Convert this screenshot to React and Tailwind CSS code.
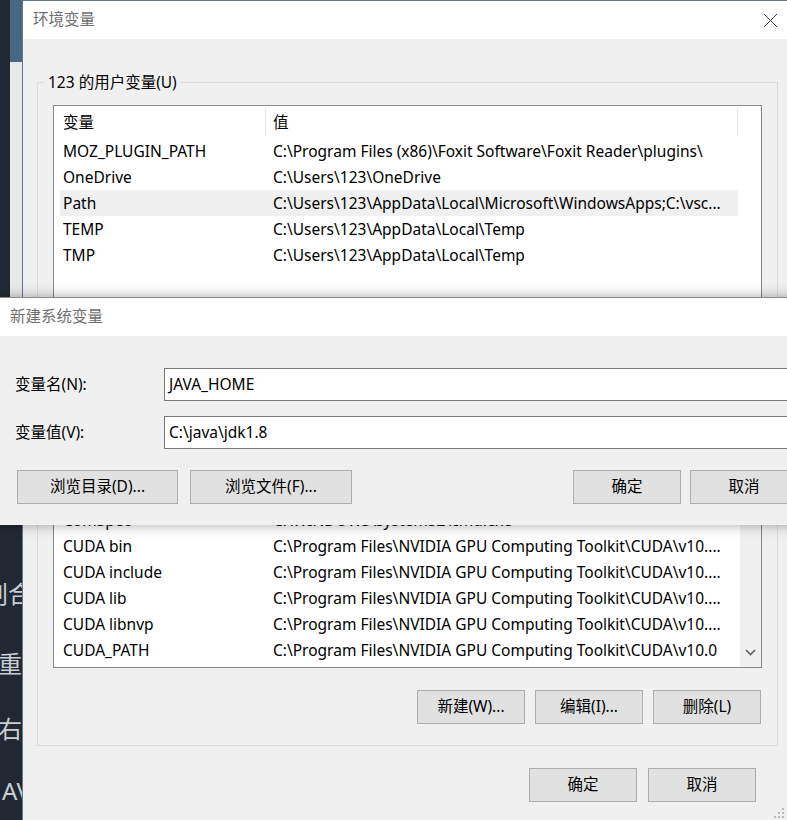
import React from "react";

const userVars = [
  ["MOZ_PLUGIN_PATH", "C:\\Program Files (x86)\\Foxit Software\\Foxit Reader\\plugins\\"],
  ["OneDrive", "C:\\Users\\123\\OneDrive"],
  ["Path", "C:\\Users\\123\\AppData\\Local\\Microsoft\\WindowsApps;C:\\vsc..."],
  ["TEMP", "C:\\Users\\123\\AppData\\Local\\Temp"],
  ["TMP", "C:\\Users\\123\\AppData\\Local\\Temp"],
];

const cuda = "C:\\Program Files\\NVIDIA GPU Computing Toolkit\\CUDA\\v10....";

const sysVars = [
  ["ChocolateyInstall", "C:\\ProgramData\\chocolatey"],
  ["CLASSPATH", ".;%JAVA_HOME%\\lib;%JAVA_HOME%\\lib\\tools.jar"],
  ["ComSpec", "C:\\WINDOWS\\system32\\cmd.exe"],
  ["CUDA bin", cuda],
  ["CUDA include", cuda],
  ["CUDA lib", cuda],
  ["CUDA libnvp", cuda],
  ["CUDA_PATH", "C:\\Program Files\\NVIDIA GPU Computing Toolkit\\CUDA\\v10.0"],
];

function Btn({ children, className = "" }) {
  return (
    <div
      className={`h-[34px] flex items-center justify-center bg-[#e1e1e1] border border-[#adadad] text-[15.5px] text-black whitespace-nowrap shrink-0 ${className}`}
    >
      {children}
    </div>
  );
}

function ListHeader() {
  return (
    <div className="flex h-[32px] shrink-0">
      <div className="w-[212px] pl-[9px] pt-[2px] flex items-center border-r border-[#e5e5e5] my-[2px]">变量</div>
      <div className="w-[472px] pl-[7px] pt-[2px] flex items-center border-r border-[#e5e5e5] my-[2px]">值</div>
    </div>
  );
}

function Row({ name, value, selected }) {
  return (
    <div
      className={`flex items-center h-[26px] pt-[2px] ml-[6px] w-[678px] shrink-0 ${selected ? "bg-[#f0f0f0]" : ""}`}
    >
      <div className="w-[213px] pl-[3px] whitespace-nowrap">{name}</div>
      <div className="flex-1 whitespace-nowrap overflow-hidden">{value}</div>
    </div>
  );
}

function GroupBox({ label, children, className = "" }) {
  return (
    <fieldset className={`border border-[#dcdcdc] ${className}`}>
      <legend className="ml-[6px] px-[4px] leading-[20px] text-[15.5px]">{label}</legend>
      {children}
    </fieldset>
  );
}

function LeftStrip() {
  return (
    <div className="w-[22px] h-[820px] shrink-0 flex bg-[#222831] overflow-hidden">
      <div className="w-[10px] shrink-0" />
      <div className="flex flex-col w-[12px]">
        <div className="h-[62px] bg-[#4a6781]" />
        <div className="h-[236px] bg-[#e9e9e9]" />
      </div>
      {/* text of the window behind, clipped by the dialog */}
      <div className="absolute left-0 top-[581px] w-[22px] overflow-hidden flex flex-col gap-[42px] text-[24px] leading-[26px] text-[#c9ced4] whitespace-nowrap">
        <div className="ml-[-16px]">创合</div>
        <div className="ml-[-2px] mt-[2px]">重新</div>
        <div className="ml-[-2px] mt-[-3px]">右键</div>
        <div className="ml-[2px] mt-[-6px]">AV</div>
      </div>
    </div>
  );
}

function MainWindow() {
  return (
    <div className="relative flex flex-col w-[770px] h-[820px] shrink-0 bg-[#f0f0f0] border-l border-t border-[#62798d]">
      <div className="h-[38px] bg-white flex items-center justify-between pl-[10px] pr-[14px] shrink-0">
        <span className="text-[15.5px] text-[#6f6f6f]">环境变量</span>
        <svg width="15" height="15" viewBox="0 0 15 15">
          <path d="M1 1L14 14M14 1L1 14" stroke="#3a3a3a" strokeWidth="1" />
        </svg>
      </div>

      <div className="flex flex-col px-[14px] pt-[33px]">
        <GroupBox label="123 的用户变量(U)">
          <div className="flex flex-col px-[15px] pb-[15px] mt-[13px]">
            <div className="flex flex-col h-[208px] bg-white border border-[#828790] text-[15.5px]">
              <ListHeader />
              {userVars.map(([n, v]) => (
                <Row key={n} name={n} value={v} selected={n === "Path"} />
              ))}
            </div>
            <div className="flex justify-end gap-[10px] mt-[22px] mr-[1px]">
              <Btn className="w-[108px]">新建(N)...</Btn>
              <Btn className="w-[108px]">编辑(E)...</Btn>
              <Btn className="w-[108px]">删除(D)</Btn>
            </div>
          </div>
        </GroupBox>

        <GroupBox label="系统变量(S)" className="mt-[4px]">
          <div className="flex flex-col px-[15px] pb-[21px] mt-[13px]">
            <div className="flex h-[246px] bg-white border border-[#828790] text-[15.5px] overflow-hidden">
              <div className="flex flex-col flex-1">
                <ListHeader />
                {sysVars.map(([n, v]) => (
                  <Row key={n} name={n} value={v} />
                ))}
              </div>
              <div className="w-[21px] shrink-0 bg-[#f0f0f0] flex flex-col justify-end items-center pb-[11px]">
                <svg width="11" height="7" viewBox="0 0 11 7">
                  <path d="M1 1L5.5 5.5L10 1" fill="none" stroke="#606060" strokeWidth="1.6" />
                </svg>
              </div>
            </div>
            <div className="flex justify-end gap-[10px] mt-[22px] mr-[1px]">
              <Btn className="w-[108px]">新建(W)...</Btn>
              <Btn className="w-[108px]">编辑(I)...</Btn>
              <Btn className="w-[108px]">删除(L)</Btn>
            </div>
          </div>
        </GroupBox>

        <div className="flex justify-end gap-[11px] mt-[22px] mr-[22px]">
          <Btn className="w-[108px]">确定</Btn>
          <Btn className="w-[108px]">取消</Btn>
        </div>
      </div>

      <svg width="10" height="10" viewBox="0 0 10 10" className="absolute right-[8px] bottom-[2px]">
        <g fill="#b8b8b8">
          <rect x="8" y="0" width="2" height="2" />
          <rect x="4" y="4" width="2" height="2" />
          <rect x="8" y="4" width="2" height="2" />
          <rect x="0" y="8" width="2" height="2" />
          <rect x="4" y="8" width="2" height="2" />
          <rect x="8" y="8" width="2" height="2" />
        </g>
      </svg>
    </div>
  );
}

function NewVarDialog() {
  return (
    <div className="absolute left-0 top-[297px] w-[820px] flex flex-col border-t border-[#8c8c8c] shadow-[0_0_12px_rgba(0,0,0,0.35)]">
      <div className="h-[38px] bg-white flex items-center pl-[10px]">
        <span className="text-[15.5px] text-[#6f6f6f]">新建系统变量</span>
      </div>
      <div className="h-[189px] bg-[#f0f0f0] flex flex-col pt-[32px] text-[15.5px]">
        <div className="flex items-center">
          <div className="w-[164px] pl-[15px] whitespace-nowrap">变量名(N):</div>
          <div className="flex-1 h-[33px] bg-white border border-[#7a7a7a] flex items-center pl-[4px]">JAVA_HOME</div>
        </div>
        <div className="flex items-center mt-[15px]">
          <div className="w-[164px] pl-[15px] whitespace-nowrap">变量值(V):</div>
          <div className="flex-1 h-[33px] bg-white border border-[#7a7a7a] flex items-center pl-[4px]">C:\java\jdk1.8</div>
        </div>
        <div className="flex mt-[21px] pl-[17px]">
          <Btn className="w-[161px]">浏览目录(D)...</Btn>
          <Btn className="w-[162px] ml-[12px]">浏览文件(F)...</Btn>
          <Btn className="w-[108px] ml-[221px]">确定</Btn>
          <Btn className="w-[108px] ml-[9px]">取消</Btn>
        </div>
      </div>
    </div>
  );
}

export default function App() {
  return (
    <div className="relative flex w-[787px] h-[820px] overflow-hidden bg-[#222831] text-black font-['Noto_Sans','Noto_Sans_CJK_SC',sans-serif]">
      <LeftStrip />
      <MainWindow />
      <NewVarDialog />
    </div>
  );
}
